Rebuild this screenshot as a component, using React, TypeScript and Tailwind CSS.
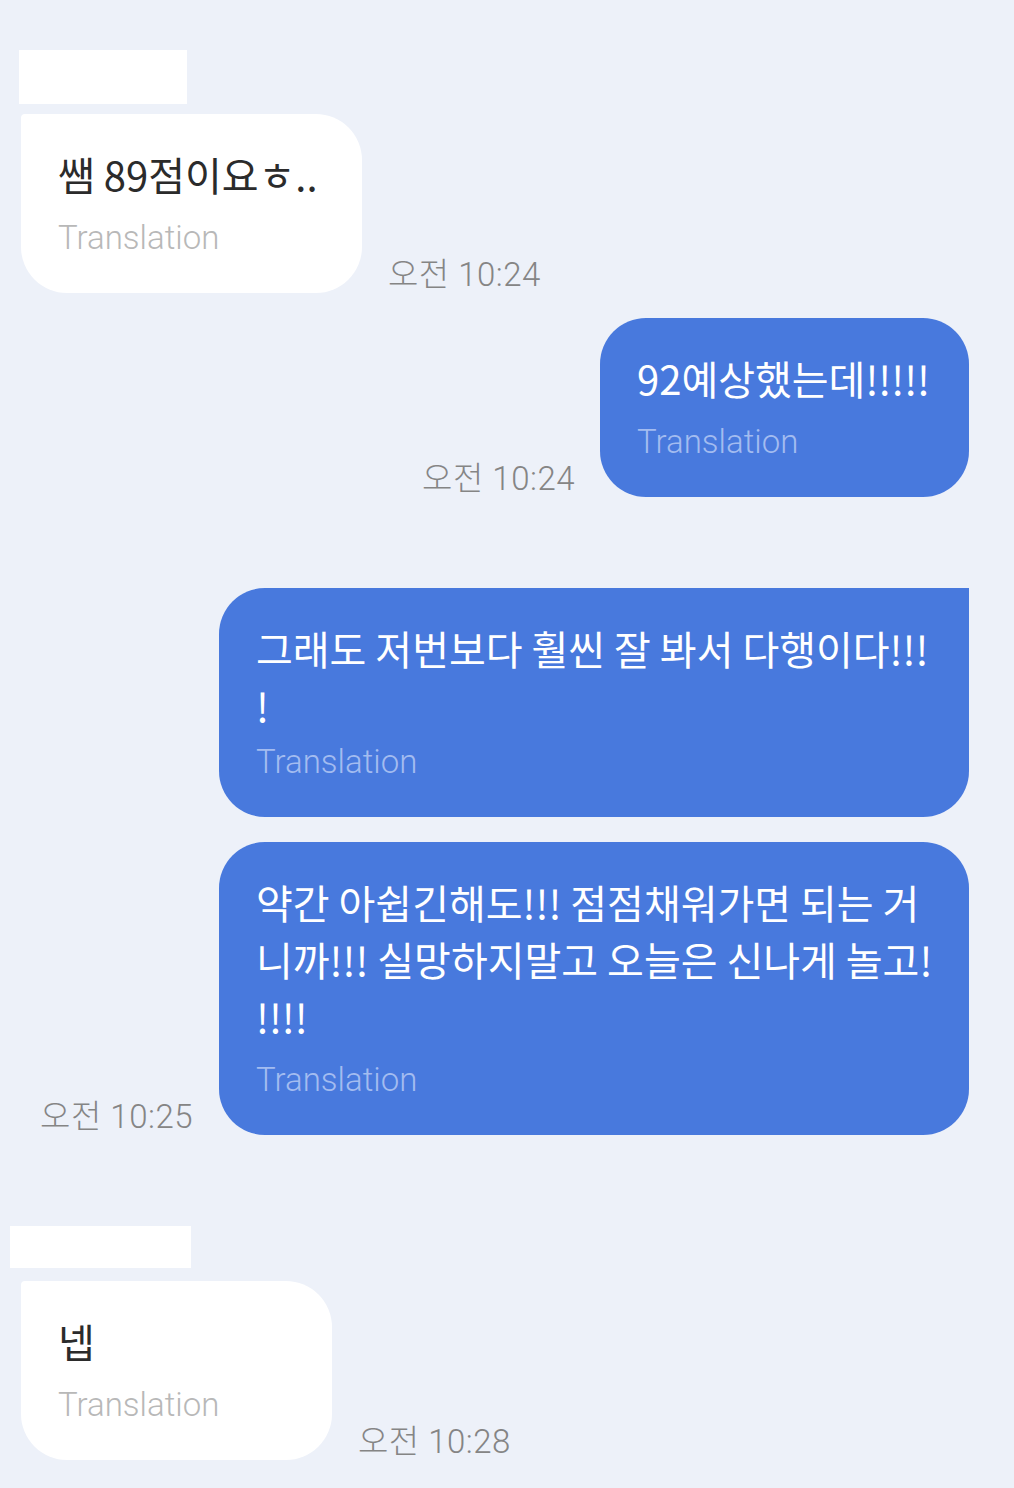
import React from 'react'

type BubbleProps = {
  lines: string[]
  mine?: boolean
  width: string
  corners: string
  transGap?: string
}

const Bubble = ({ lines, mine, width, corners, transGap }: BubbleProps): JSX.Element => {
  return (
    <div
      className={`${width} ${corners} shrink-0 pl-[37px] pr-[20px] pt-[32px] pb-[27px] ${
        mine ? 'bg-[#4879dd]' : 'bg-white'
      }`}
    >
      <div
        className={`font-['Noto_Sans_CJK_KR',sans-serif] text-[40px] leading-[57px] whitespace-nowrap ${
          mine ? 'text-white' : 'text-[#2b2b2b]'
        }`}
      >
        {lines.map((line, i) => (
          <div key={i}>{line}</div>
        ))}
      </div>
      <div
        className={`${transGap ?? 'mt-[6px]'} font-['Roboto',sans-serif] font-light text-[33px] leading-[57px] ${
          mine ? 'text-[#a3bcf0]' : 'text-[#b8b8b8]'
        }`}
      >
        Translation
      </div>
    </div>
  )
}

const Time = ({ value }: { value: string }): JSX.Element => (
  <div className="h-[36px] shrink-0 whitespace-nowrap font-['Roboto','Noto_Sans_CJK_KR',sans-serif] font-light text-[33px] leading-[36px] tracking-[0.5px] text-[#858585]">
    {value}
  </div>
)

export default function App(): JSX.Element {
  return (
    <div className="w-[1014px] h-[1488px] overflow-hidden bg-[#edf1f9] pt-[50px] flex flex-col">
      {/* incoming */}
      <div className="ml-[19px] w-[168px] h-[54px] bg-white" />
      <div className="mt-[10px] pl-[21px] flex flex-row items-end gap-[26px]">
        <Bubble lines={['쌤 89점이요ㅎ..']} width="w-[341px]" corners="rounded-[46px] rounded-tl-[4px]" />
        <Time value="오전 10:24" />
      </div>

      {/* outgoing */}
      <div className="mt-[25px] pr-[45px] flex flex-row justify-end items-end gap-[25px]">
        <Time value="오전 10:24" />
        <Bubble lines={['92예상했는데!!!!!']} mine width="w-[369px]" corners="rounded-[46px]" />
      </div>

      <div className="mt-[91px] pr-[45px] flex flex-row justify-end items-end">
        <Bubble
          lines={['그래도 저번보다 훨씬 잘 봐서 다행이다!!!', '!']}
          mine
          width="w-[750px]"
          corners="rounded-[46px] rounded-tr-none"
          transGap="-mt-[1px]"
        />
      </div>

      <div className="mt-[25px] pr-[45px] flex flex-row justify-end items-end gap-[26px]">
        <Time value="오전 10:25" />
        <Bubble
          lines={['약간 아쉽긴해도!!! 점점채워가면 되는 거', '니까!!! 실망하지말고 오늘은 신나게 놀고!', '!!!!']}
          mine
          width="w-[750px]"
          corners="rounded-[46px]"
        />
      </div>

      {/* incoming */}
      <div className="mt-[91px] ml-[10px] w-[181px] h-[42px] bg-white" />
      <div className="mt-[13px] pl-[21px] flex flex-row items-end gap-[26px]">
        <Bubble lines={['넵']} width="w-[311px]" corners="rounded-[46px] rounded-tl-[4px]" />
        <Time value="오전 10:28" />
      </div>
    </div>
  )
}
